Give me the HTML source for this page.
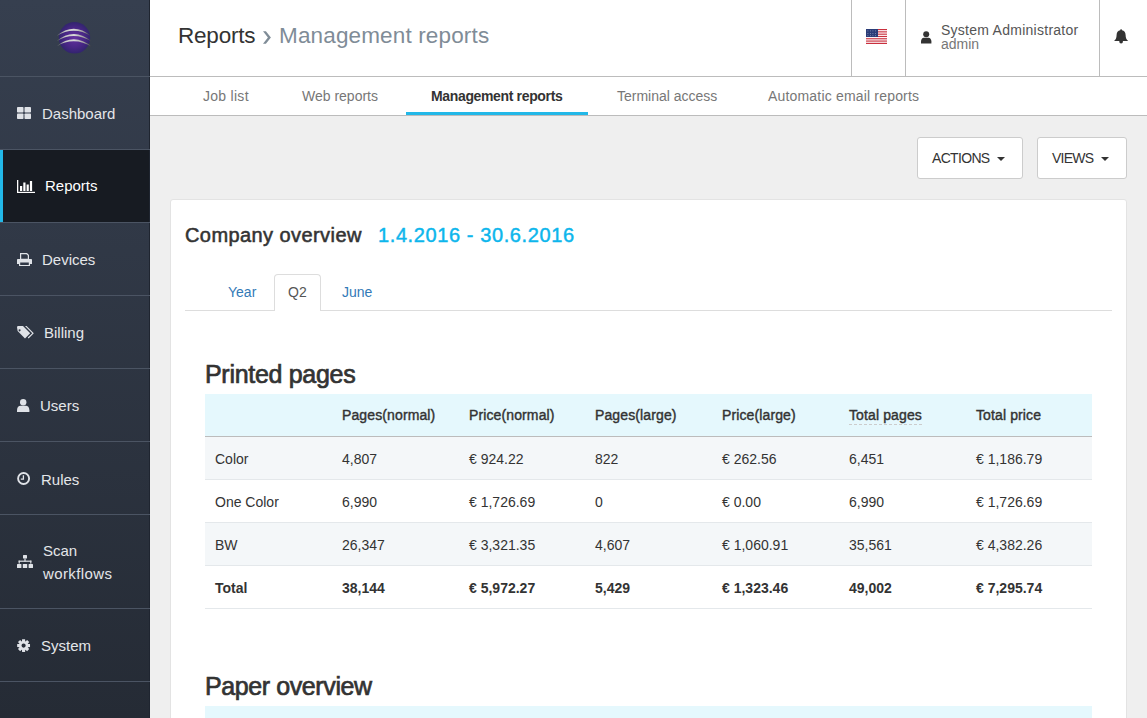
<!DOCTYPE html>
<html><head><meta charset="utf-8">
<style>
*{box-sizing:border-box;margin:0;padding:0}
html,body{width:1147px;height:718px;overflow:hidden;background:#efefef;font-family:"Liberation Sans",sans-serif;color:#333}
.abs{position:absolute}
svg{position:absolute;overflow:visible}
#side{position:absolute;left:0;top:0;width:150px;height:718px;background:linear-gradient(#363f4f,#252b35);border-right:1px solid #1f2530}
#side .sep{position:absolute;left:0;width:150px;z-index:2;height:1px;background:#4b5463}
#side .item{position:absolute;left:0;width:149px;color:#e4e6e9;font-size:15px}
#side .item span{position:absolute;white-space:nowrap}
#side .active{background:#171b22;color:#fff}
#header{position:absolute;left:150px;top:0;width:997px;height:77px;background:#fff;border-bottom:1px solid #bcbcbc}
#tabs{position:absolute;left:150px;top:77px;width:997px;height:39px;background:#fff;border-bottom:1px solid #bcbcbc}
#tabs span{position:absolute;top:11px;font-size:14px;color:#777;white-space:nowrap}
.btn{position:absolute;background:#fff;border:1px solid #ccc;border-radius:3px;font-size:14px;color:#333}
.caret{position:absolute;width:0;height:0;border-left:4px solid transparent;border-right:4px solid transparent;border-top:4px solid #333}
.card{position:absolute;left:170px;top:199px;width:957px;height:540px;background:#fff;border:1px solid #e3e3e3;border-radius:3px}
table{border-collapse:collapse;position:absolute;left:205px;width:887px;font-size:14px;color:#333}
td{padding-top:2px!important}
td,th{height:43px;padding:1px 0 0 10px;text-align:left;vertical-align:middle;border-top:1px solid #e4e8eb;white-space:nowrap}
th{font-weight:normal;letter-spacing:0.12px;-webkit-text-stroke:0.4px #333;background:#e5f8fd;border-top:none;border-bottom:1px solid #bcbcbc;height:42px}
tr.s:nth-child(2) td{border-top:1px solid #fafafa}
tr.s td{background:#f4f7f9}
tr.last td{border-bottom:1px solid #e4e8eb}
</style></head><body>
<div id="side">
  <svg width="150" height="76" style="left:0;top:0">
    <defs>
      <radialGradient id="sph" cx="0.5" cy="0.5" r="0.55">
        <stop offset="0" stop-color="#6531a0"/>
        <stop offset="0.6" stop-color="#472684"/>
        <stop offset="1" stop-color="#2c2468"/>
      </radialGradient>
      <linearGradient id="arc" x1="0" x2="1">
        <stop offset="0" stop-color="#666"/><stop offset="0.25" stop-color="#c8c8c8"/><stop offset="0.5" stop-color="#d8d8d8"/><stop offset="0.8" stop-color="#999"/><stop offset="1" stop-color="#333"/>
      </linearGradient>
    </defs>
    <circle cx="74.5" cy="37.8" r="15.7" fill="url(#sph)"/>
    <path d="M56.5 36 Q74 21.6 91 36.2 Q74 25.6 56.5 36Z" fill="url(#arc)"/>
    <path d="M56.5 41.2 Q74 26.6 92 41.7 Q74 30.6 56.5 41.2Z" fill="url(#arc)"/>
    <path d="M56.5 46.4 Q74 32 92 46.9 Q74 36 56.5 46.4Z" fill="url(#arc)"/>
  </svg>
  <div class="sep" style="top:76px"></div>
  <div class="item" style="top:77px;height:72px">
    <svg width="15" height="13" style="left:17px;top:30px" fill="#dfe2e7"><rect x="0" y="0" width="6.5" height="5.5" rx="0.8"/><rect x="7.5" y="0" width="6.5" height="5.5" rx="0.8"/><rect x="0" y="6.5" width="6.5" height="5.5" rx="0.8"/><rect x="7.5" y="6.5" width="6.5" height="5.5" rx="0.8"/></svg>
    <span style="left:42px;top:28px">Dashboard</span></div>
  <div class="sep" style="top:149px"></div>
  <div class="item active" style="top:150px;height:72px">
    <div class="abs" style="left:0;top:0;width:3px;height:72px;background:#22b8e8"></div>
    <svg width="19" height="14" style="left:17px;top:30px" fill="#fff"><rect x="0" y="0" width="1.3" height="13"/><rect x="0" y="11.8" width="18" height="1.2"/><rect x="3" y="6" width="2.2" height="5"/><rect x="6.3" y="2.5" width="2.2" height="8.5"/><rect x="9.6" y="4.5" width="2.2" height="6.5"/><rect x="12.9" y="1" width="2.2" height="10"/></svg>
    <span style="left:45px;top:27px">Reports</span></div>
  <div class="sep" style="top:222px"></div>
  <div class="item" style="top:223px;height:72px">
    <svg width="15" height="14" style="left:17px;top:30px" fill="#dfe2e7"><path d="M3 0h7l2 2v4H3z M4.2 1.2v4.6h6.6V2.6l-1.4-1.4z"/><path d="M0.8 6h13.4a0.8 0.8 0 0 1 0.8 0.8V11h-2v2H2v-2H0V6.8A0.8 0.8 0 0 1 0.8 6z M3.2 9.5v2.5h8.6V9.5z"/></svg>
    <span style="left:42px;top:28px">Devices</span></div>
  <div class="sep" style="top:295px"></div>
  <div class="item" style="top:296px;height:72px">
    <svg width="18" height="14" style="left:17px;top:30px" fill="#dfe2e7"><path d="M0 1.2A1.2 1.2 0 0 1 1.2 0H6l7.2 7.2L8 12.4 0.6 5z M2.6 3.2a1 1 0 1 0 0.01 0z"/><path d="M8 0h1.6l7.2 7.2-5.2 5.2-0.8-0.8 4.4-4.4z"/></svg>
    <span style="left:44px;top:28px">Billing</span></div>
  <div class="sep" style="top:368px"></div>
  <div class="item" style="top:369px;height:72px">
    <svg width="13" height="14" style="left:17px;top:30px" fill="#dfe2e7"><circle cx="6.2" cy="3.2" r="3.2"/><path d="M0 11.2C0 8.3 1.8 6.8 3.4 6.8h5.6c1.6 0 3.4 1.5 3.4 4.4V13H0z"/></svg>
    <span style="left:40px;top:28px">Users</span></div>
  <div class="sep" style="top:441px"></div>
  <div class="item" style="top:442px;height:72px">
    <svg width="14" height="14" style="left:17px;top:30px"><circle cx="6.6" cy="6.5" r="5.5" stroke="#dfe2e7" stroke-width="1.9" fill="none"/><path d="M6.4 3.2V7.2H3.8" stroke="#dfe2e7" stroke-width="1.3" fill="none"/></svg>
    <span style="left:41px;top:29px">Rules</span></div>
  <div class="sep" style="top:514px"></div>
  <div class="item" style="top:515px;height:93px">
    <svg width="17" height="14" style="left:17px;top:40px" fill="#dfe2e7"><rect x="6" y="0" width="4" height="3.5" rx="0.5"/><rect x="7.4" y="3.5" width="1.2" height="3"/><rect x="1.6" y="5.6" width="12.8" height="1.2"/><rect x="1.6" y="5.6" width="1.2" height="3"/><rect x="13.2" y="5.6" width="1.2" height="3"/><rect x="0" y="9" width="4.4" height="4" rx="0.5"/><rect x="5.8" y="9" width="4.4" height="4" rx="0.5"/><rect x="11.6" y="9" width="4.4" height="4" rx="0.5"/></svg>
    <span style="left:43px;top:24px;line-height:23px">Scan<br><span style="position:static;letter-spacing:0.38px">workflows</span></span></div>
  <div class="sep" style="top:608px"></div>
  <div class="item" style="top:609px;height:72px">
    <svg width="14" height="14" style="left:17px;top:30px" fill="#dfe2e7"><path fill-rule="evenodd" d="M10.91 4.98 L13.03 5.10 L13.03 8.10 L10.91 8.22 L10.79 8.50 L12.21 10.08 L10.08 12.21 L8.50 10.79 L8.22 10.91 L8.10 13.03 L5.10 13.03 L4.98 10.91 L4.70 10.79 L3.12 12.21 L0.99 10.08 L2.41 8.50 L2.29 8.22 L0.17 8.10 L0.17 5.10 L2.29 4.98 L2.41 4.70 L0.99 3.12 L3.12 0.99 L4.70 2.41 L4.98 2.29 L5.10 0.17 L8.10 0.17 L8.22 2.29 L8.50 2.41 L10.08 0.99 L12.21 3.12 L10.79 4.70Z M8.70 6.60 A2.1 2.1 0 1 0 4.50 6.60 A2.1 2.1 0 1 0 8.70 6.60Z"/></svg>
    <span style="left:41px;top:28px">System</span></div>
  <div class="sep" style="top:681px"></div>
</div>
<div id="header">
  <div class="abs" style="left:28px;top:23px;font-size:22.5px;color:#333;white-space:nowrap;letter-spacing:-0.2px">Reports</div>
  <svg width="10" height="16" style="left:112px;top:30px"><path d="M1 1.2H3.9L8.9 7.5 3.9 13.8H1L5.9 7.5Z" fill="#7f8c97"/></svg>
  <div class="abs" style="left:129px;top:23px;font-size:22.5px;color:#7f8c97;white-space:nowrap;letter-spacing:0.15px">Management reports</div>
  <div class="abs" style="left:701px;top:0;width:1px;height:76px;background:#bcbcbc"></div>
  <div class="abs" style="left:755px;top:0;width:1px;height:76px;background:#bcbcbc"></div>
  <div class="abs" style="left:949px;top:0;width:1px;height:76px;background:#bcbcbc"></div>
  <svg width="21" height="15" style="left:716px;top:29px">
    <rect width="21" height="15" fill="#fff"/>
    <g fill="#c9303e"><rect y="0" width="21" height="1.15"/><rect y="2.3" width="21" height="1.15"/><rect y="4.6" width="21" height="1.15"/><rect y="6.9" width="21" height="1.15"/><rect y="9.2" width="21" height="1.15"/><rect y="11.5" width="21" height="1.15"/><rect y="13.8" width="21" height="1.2"/></g>
    <rect width="12" height="8" fill="#2b3d78"/><rect x="1.5" y="1.5" width="0.8" height="0.8" fill="#9aa3c4"/><rect x="4" y="1.5" width="0.8" height="0.8" fill="#9aa3c4"/><rect x="6.5" y="1.5" width="0.8" height="0.8" fill="#9aa3c4"/><rect x="9" y="1.5" width="0.8" height="0.8" fill="#9aa3c4"/><rect x="1.5" y="4" width="0.8" height="0.8" fill="#9aa3c4"/><rect x="4" y="4" width="0.8" height="0.8" fill="#9aa3c4"/><rect x="6.5" y="4" width="0.8" height="0.8" fill="#9aa3c4"/><rect x="9" y="4" width="0.8" height="0.8" fill="#9aa3c4"/><rect x="1.5" y="6.3" width="0.8" height="0.8" fill="#9aa3c4"/><rect x="4" y="6.3" width="0.8" height="0.8" fill="#9aa3c4"/><rect x="6.5" y="6.3" width="0.8" height="0.8" fill="#9aa3c4"/><rect x="9" y="6.3" width="0.8" height="0.8" fill="#9aa3c4"/>
  </svg>
  <svg width="11" height="13" style="left:771px;top:31px" fill="#333"><circle cx="5.2" cy="3.2" r="3"/><path d="M0 10.5C0 8 1.4 6.7 2.8 6.7h4.8c1.4 0 2.8 1.3 2.8 3.8V12.5H0z"/></svg>
  <div class="abs" style="left:791px;top:23px;font-size:14px;color:#444;line-height:14px;white-space:nowrap;color:#555"><span style="letter-spacing:0.26px">System Administrator</span><br><span style="color:#777">admin</span></div>
  <svg width="15" height="15" style="left:964px;top:29px" fill="#333"><path d="M7.1 0.3c0.6 0 0.9 0.5 0.9 1 2.2 0.4 3.6 2.2 3.6 4.6 0 3.3 1 4.4 2.6 6.2H0c1.6-1.8 2.6-2.9 2.6-6.2 0-2.4 1.4-4.2 3.6-4.6 0-0.5 0.3-1 0.9-1z M5.2 12h3.8a1.9 2.6 0 0 1-3.8 0z"/></svg>
</div>
<div id="tabs">
  <span style="left:53px;letter-spacing:0.28px">Job list</span>
  <span style="left:152px">Web reports</span>
  <span style="left:281px;color:#333;font-weight:bold;letter-spacing:-0.35px">Management reports</span>
  <span style="left:467px">Terminal access</span>
  <span style="left:618px;letter-spacing:0.18px">Automatic email reports</span>
  <div class="abs" style="left:256px;top:35px;width:182px;height:3px;background:#22b8e8"></div>
</div>
<div class="btn" style="left:917px;top:137px;width:106px;height:42px"><span class="abs" style="left:14px;top:12px;letter-spacing:-0.67px">ACTIONS</span><span class="caret" style="left:79px;top:19px"></span></div>
<div class="btn" style="left:1037px;top:137px;width:90px;height:42px"><span class="abs" style="left:14px;top:12px;letter-spacing:-0.75px">VIEWS</span><span class="caret" style="left:63px;top:19px"></span></div>
<div class="card">
  <div class="abs" style="left:14px;top:24px;font-size:20px;color:#333;white-space:nowrap;letter-spacing:0.42px;-webkit-text-stroke:0.55px #333">Company overview</div>
  <div class="abs" style="left:207px;top:24px;font-size:20px;color:#0db6ec;white-space:nowrap;letter-spacing:0.6px;-webkit-text-stroke:0.45px #0db6ec">1.4.2016 - 30.6.2016</div>
  <div class="abs" style="left:14px;top:110px;width:927px;height:1px;background:#ddd"></div>
  <div class="abs" style="left:103px;top:74px;width:47px;height:37px;background:#fff;border:1px solid #ddd;border-bottom:none;border-radius:4px 4px 0 0"></div>
  <div class="abs" style="left:57px;top:84px;font-size:14px;color:#337ab7">Year</div>
  <div class="abs" style="left:117px;top:84px;font-size:14px;color:#555">Q2</div>
  <div class="abs" style="left:171px;top:84px;font-size:14px;color:#337ab7">June</div>
  <div class="abs" style="left:34px;top:160px;font-size:25px;color:#333;white-space:nowrap;letter-spacing:-0.3px;-webkit-text-stroke:0.7px #333">Printed pages</div>
  <div class="abs" style="left:34px;top:472px;font-size:25px;color:#333;white-space:nowrap;letter-spacing:-0.4px;-webkit-text-stroke:0.7px #333">Paper overview</div>
  <div class="abs" style="left:34px;top:506px;width:887px;height:40px;background:#e5f8fd"></div>
</div>
<table style="top:394px">
<tr><th style="width:127px"></th><th style="width:127px">Pages(normal)</th><th style="width:126px">Price(normal)</th><th style="width:127px">Pages(large)</th><th style="width:127px">Price(large)</th><th style="width:127px"><span style="position:relative">Total pages<i style="position:absolute;left:0;right:0;bottom:-2px;height:1px;background:repeating-linear-gradient(90deg,#cccccc 0 3px,transparent 3px 5px)"></i></span></th><th>Total price</th></tr>
<tr class="s"><td>Color</td><td>4,807</td><td>€ 924.22</td><td>822</td><td>€ 262.56</td><td>6,451</td><td>€ 1,186.79</td></tr>
<tr><td>One Color</td><td>6,990</td><td>€ 1,726.69</td><td>0</td><td>€ 0.00</td><td>6,990</td><td>€ 1,726.69</td></tr>
<tr class="s"><td>BW</td><td>26,347</td><td>€ 3,321.35</td><td>4,607</td><td>€ 1,060.91</td><td>35,561</td><td>€ 4,382.26</td></tr>
<tr style="font-weight:bold" class="last"><td>Total</td><td>38,144</td><td>€ 5,972.27</td><td>5,429</td><td>€ 1,323.46</td><td>49,002</td><td>€ 7,295.74</td></tr>
</table>
</body></html>
